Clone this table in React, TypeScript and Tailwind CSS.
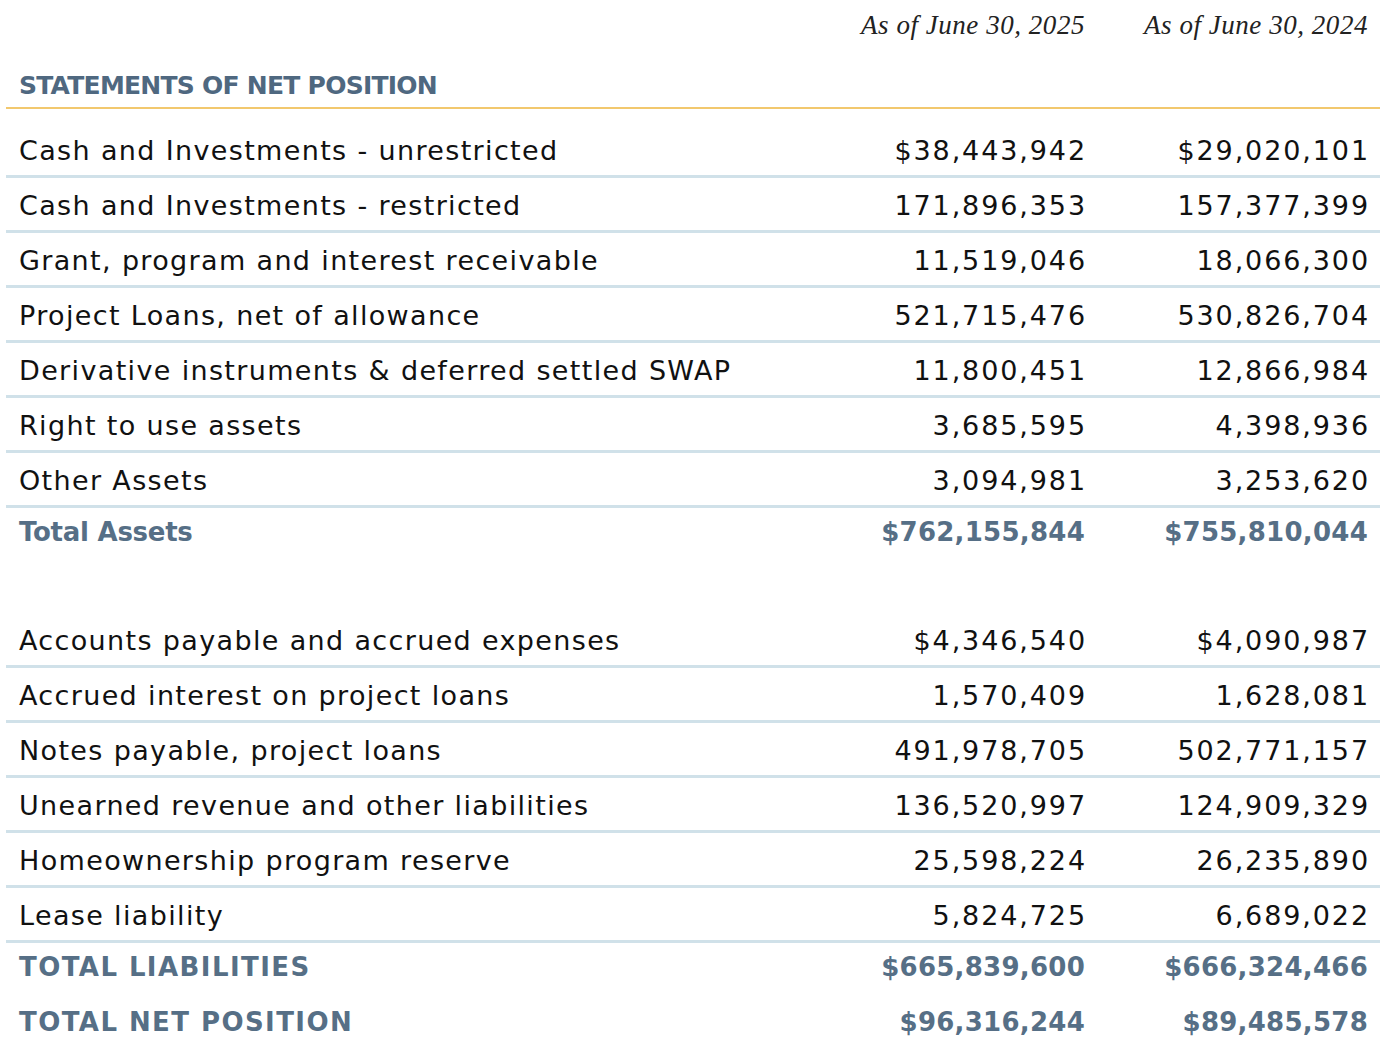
const assets = [
  ["Cash and Investments - unrestricted", "$38,443,942", "$29,020,101"],
  ["Cash and Investments - restricted", "171,896,353", "157,377,399"],
  ["Grant, program and interest receivable", "11,519,046", "18,066,300"],
  ["Project Loans, net of allowance", "521,715,476", "530,826,704"],
  ["Derivative instruments & deferred settled SWAP", "11,800,451", "12,866,984"],
  ["Right to use assets", "3,685,595", "4,398,936"],
  ["Other Assets", "3,094,981", "3,253,620"],
];

const liabilities = [
  ["Accounts payable and accrued expenses", "$4,346,540", "$4,090,987"],
  ["Accrued interest on project loans", "1,570,409", "1,628,081"],
  ["Notes payable, project loans", "491,978,705", "502,771,157"],
  ["Unearned revenue and other liabilities", "136,520,997", "124,909,329"],
  ["Homeownership program reserve", "25,598,224", "26,235,890"],
  ["Lease liability", "5,824,725", "6,689,022"],
];

function Row({ label, a, b }: { label: string; a: string; b: string }) {
  return (
    <div className="flex h-[55px] items-center border-b-[3px] border-[#d0e1e9] pl-[13px] pr-[10px] pt-[4px] text-[27px] text-[#111]">
      <span className="flex-1 tracking-[0.05em]">{label}</span>
      <span className="w-[262px] text-right tracking-[0.07em]">{a}</span>
      <span className="w-[283px] text-right tracking-[0.07em]">{b}</span>
    </div>
  );
}

function TotalRow({
  label,
  a,
  b,
  tight = false,
  className = "",
}: {
  label: string;
  a: string;
  b: string;
  tight?: boolean;
  className?: string;
}) {
  return (
    <div className={`flex items-center pl-[13px] pr-[12px] text-[26px] font-bold text-[#566f86] ${className}`}>
      <span className={`flex-1 ${tight ? "tracking-[-0.01em]" : "tracking-[0.055em]"}`}>{label}</span>
      <span className="w-[260px] text-right tracking-[0.01em]">{a}</span>
      <span className="w-[283px] text-right tracking-[0.01em]">{b}</span>
    </div>
  );
}

export default function App() {
  return (
    <div className="h-[1046px] w-[1382px] overflow-hidden bg-white pl-[6px] pr-[2px] font-['DejaVu_Sans',sans-serif]">
      <div className="flex h-[50px] items-center pr-[12px] font-['Liberation_Serif',serif] text-[27px] italic tracking-[0.02em] text-[#222]">
        <span className="flex-1" />
        <span className="w-[260px] text-right">As of June 30, 2025</span>
        <span className="w-[283px] text-right">As of June 30, 2024</span>
      </div>
      <div className="flex h-[59px] items-center border-b-2 border-[#f2c86e] pl-[13px] pt-[14px] text-[25px] font-bold tracking-[-0.03em] text-[#4f6880]">
        STATEMENTS OF NET POSITION
      </div>
      <div className="pt-[14px]">
        {assets.map(([l, a, b]) => (
          <Row key={l} label={l} a={a} b={b} />
        ))}
        <TotalRow label="Total Assets" a="$762,155,844" b="$755,810,044" tight className="h-[46px] pt-[3px]" />
      </div>
      <div className="pt-[59px]">
        {liabilities.map(([l, a, b]) => (
          <Row key={l} label={l} a={a} b={b} />
        ))}
        <TotalRow label="TOTAL LIABILITIES" a="$665,839,600" b="$666,324,466" className="h-[48px]" />
        <TotalRow label="TOTAL NET POSITION" a="$96,316,244" b="$89,485,578" className="mt-[7px] h-[48px]" />
      </div>
    </div>
  );
}
